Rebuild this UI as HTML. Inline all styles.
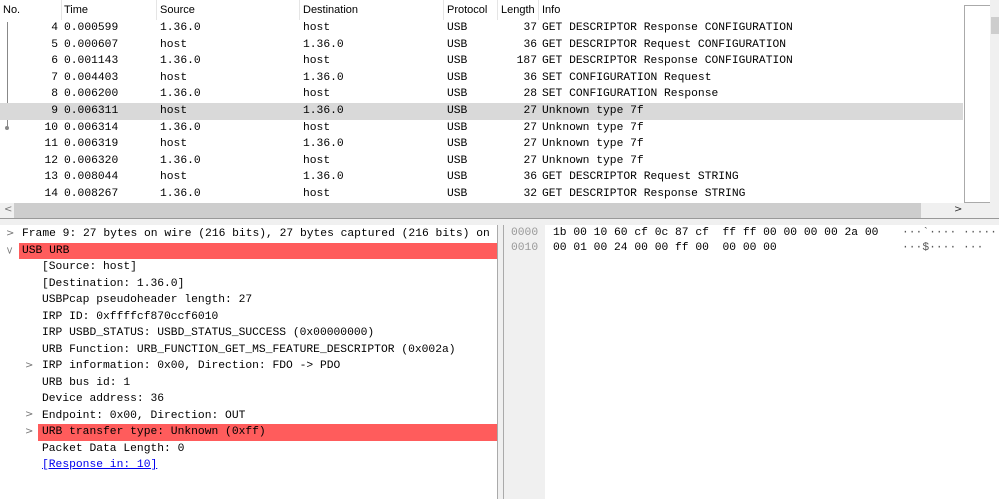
<!DOCTYPE html>
<html><head><style>
body{margin:0;width:999px;height:499px;overflow:hidden;background:#fff;font-family:"Liberation Mono",monospace;font-size:11.3px;color:#000;position:relative}
.h{position:absolute;top:0;left:0;width:990px;height:20px;font-family:"Liberation Sans",sans-serif;font-size:11px;background:#fff}
.h span{position:absolute;top:4px}
.sep{position:absolute;top:0;height:20px;border-left:1px solid #e5e5e5}
.r{position:absolute;left:0;width:963px;height:16.6px;line-height:16.6px;white-space:pre}
.r span{position:absolute;top:0}
.d{position:absolute;left:0;width:497px;height:16.5px;line-height:16.5px;white-space:pre}
.d span{position:absolute;top:0}
.red{background:#ff5c5c}
.ar{position:absolute;color:#777;font-family:"DejaVu Sans",sans-serif;font-size:10px}
</style></head><body>
<div class="h"><span style="left:3px">No.</span><span style="left:64px">Time</span><span style="left:160px">Source</span><span style="left:303px">Destination</span><span style="left:447px">Protocol</span><span style="left:501px">Length</span><span style="left:542px">Info</span>
<div class="sep" style="left:61px"></div><div class="sep" style="left:156px"></div><div class="sep" style="left:299px"></div><div class="sep" style="left:443px"></div><div class="sep" style="left:497px"></div><div class="sep" style="left:538px"></div></div>
<div style="position:absolute;left:7px;top:22px;height:106px;border-left:1px solid #888"></div>
<div style="position:absolute;left:5px;top:126px;width:4px;height:4px;border-radius:2px;background:#888"></div>
<div id="rows"></div>
<script>
var R=[["4","0.000599","1.36.0","host","37","GET DESCRIPTOR Response CONFIGURATION"],["5","0.000607","host","1.36.0","36","GET DESCRIPTOR Request CONFIGURATION"],["6","0.001143","1.36.0","host","187","GET DESCRIPTOR Response CONFIGURATION"],["7","0.004403","host","1.36.0","36","SET CONFIGURATION Request"],["8","0.006200","1.36.0","host","28","SET CONFIGURATION Response"],["9","0.006311","host","1.36.0","27","Unknown type 7f"],["10","0.006314","1.36.0","host","27","Unknown type 7f"],["11","0.006319","host","1.36.0","27","Unknown type 7f"],["12","0.006320","1.36.0","host","27","Unknown type 7f"],["13","0.008044","host","1.36.0","36","GET DESCRIPTOR Request STRING"],["14","0.008267","1.36.0","host","32","GET DESCRIPTOR Response STRING"]];
var h="";R.forEach(function(r,i){h+='<div class="r" style="top:'+(20+i*16.6)+'px;'+(i==5?'background:#d9d9d9':'')+'"><span style="right:905px">'+r[0]+'</span><span style="left:64px">'+r[1]+'</span><span style="left:160px">'+r[2]+'</span><span style="left:303px">'+r[3]+'</span><span style="left:447px">USB</span><span style="right:426px">'+r[4]+'</span><span style="left:542px">'+r[5]+'</span></div>';});
document.getElementById("rows").innerHTML=h;
</script>
<div style="position:absolute;left:964px;top:5px;width:25px;height:196px;border:1px solid #aaa;background:#fff"></div>
<div style="position:absolute;left:990px;top:0;width:9px;height:203px;background:#f0f0f0"></div>
<div style="position:absolute;left:991px;top:17px;width:8px;height:17px;background:#cdcdcd"></div>
<div style="position:absolute;left:0;top:203px;width:999px;height:15px;background:#f0f0f0"></div>
<div style="position:absolute;left:14px;top:203px;width:907px;height:15px;background:#cdcdcd"></div>
<div class="ar" style="left:4px;top:204px">&lt;</div><div class="ar" style="left:954px;top:204px;color:#333">&gt;</div>
<div style="position:absolute;left:0;top:218px;width:999px;height:1px;background:#999"></div>
<div style="position:absolute;left:0;top:219px;width:999px;height:6px;background:#f0f0f0"></div>
<div style="position:absolute;left:497px;top:225px;width:7px;height:274px;background:#f0f0f0;border-left:1px solid #aaa;border-right:1px solid #aaa;box-sizing:border-box"></div>
<div class="d" style="top:226px"><span style="left:22px">Frame 9: 27 bytes on wire (216 bits), 27 bytes captured (216 bits) on</span></div>
<div class="d red" style="top:242.5px;left:19px;width:478px"><span style="left:3px">USB URB</span></div>
<div class="d" style="top:259px"><span style="left:42px">[Source: host]</span></div>
<div class="d" style="top:275.5px"><span style="left:42px">[Destination: 1.36.0]</span></div>
<div class="d" style="top:292px"><span style="left:42px">USBPcap pseudoheader length: 27</span></div>
<div class="d" style="top:308.5px"><span style="left:42px">IRP ID: 0xffffcf870ccf6010</span></div>
<div class="d" style="top:325px"><span style="left:42px">IRP USBD_STATUS: USBD_STATUS_SUCCESS (0x00000000)</span></div>
<div class="d" style="top:341.5px"><span style="left:42px">URB Function: URB_FUNCTION_GET_MS_FEATURE_DESCRIPTOR (0x002a)</span></div>
<div class="d" style="top:358px"><span style="left:42px">IRP information: 0x00, Direction: FDO -&gt; PDO</span></div>
<div class="d" style="top:374.5px"><span style="left:42px">URB bus id: 1</span></div>
<div class="d" style="top:391px"><span style="left:42px">Device address: 36</span></div>
<div class="d" style="top:407.5px"><span style="left:42px">Endpoint: 0x00, Direction: OUT</span></div>
<div class="d red" style="top:424px;left:38px;width:459px"><span style="left:4px">URB transfer type: Unknown (0xff)</span></div>
<div class="d" style="top:440.5px"><span style="left:42px">Packet Data Length: 0</span></div>
<div class="d" style="top:457px"><span style="left:42px;color:#00e;text-decoration:underline">[Response in: 10]</span></div>
<div class="ar" style="left:6px;top:228px">&gt;</div>
<div class="ar" style="left:5px;top:245px;transform:rotate(90deg)">&gt;</div>
<div class="ar" style="left:25px;top:360px">&gt;</div>
<div class="ar" style="left:25px;top:409px">&gt;</div>
<div class="ar" style="left:25px;top:426px">&gt;</div>
<div style="position:absolute;left:504px;top:225px;width:41px;height:274px;background:#f0f0f0"></div>
<div class="d" style="left:504px;width:495px;top:225px"><span style="left:7px;color:#999">0000</span><span style="left:49px">1b 00 10 60 cf 0c 87 cf  ff ff 00 00 00 00 2a 00</span><span style="left:398px;color:#555">···`···· ······</span></div>
<div class="d" style="left:504px;width:495px;top:240px"><span style="left:7px;color:#999">0010</span><span style="left:49px">00 01 00 24 00 00 ff 00  00 00 00</span><span style="left:398px;color:#555">···$···· ···</span></div>
</body></html>
